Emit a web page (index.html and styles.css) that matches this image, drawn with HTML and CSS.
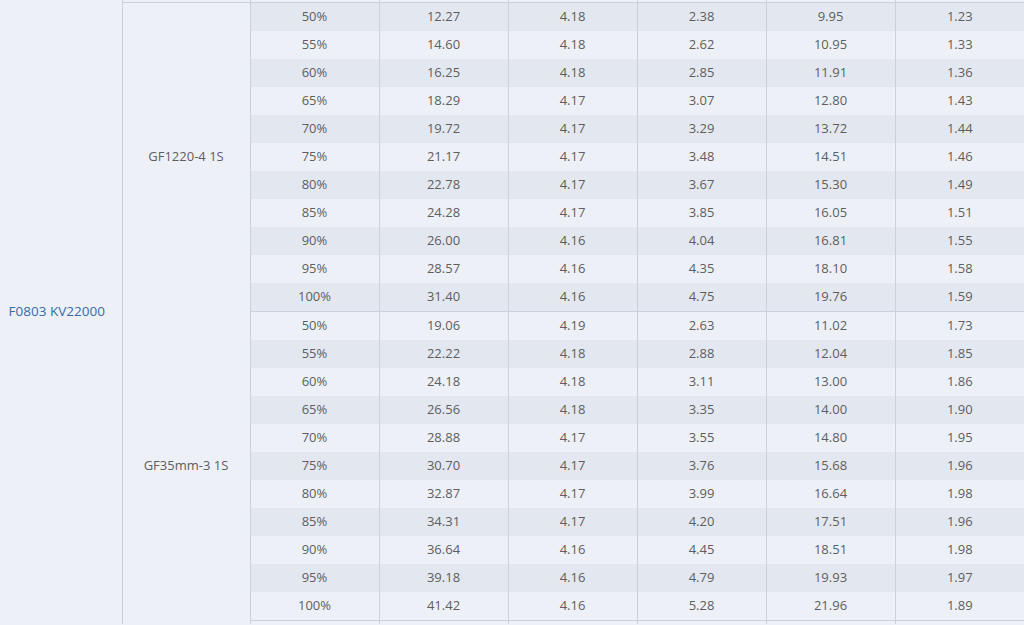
FILE: index.html
```html
<!DOCTYPE html>
<html lang="zh">
<head>
<meta charset="utf-8">
<title>F0803 KV22000</title>
<link rel="stylesheet" href="styles.css">
</head>
<body>
<table class="data">
<colgroup>
<col class="c-motor"><col class="c-prop"><col class="c-w"><col class="c-w"><col class="c-w"><col class="c-w"><col class="c-w"><col class="c-w">
</colgroup>
<tbody>
<tr class="edge-top"><td class="motor-cont"></td><td></td><td></td><td></td><td></td><td></td><td></td><td></td></tr>
<tr class="first"><td class="motor" rowspan="22">F0803 KV22000</td><td class="prop" rowspan="11">GF1220-4 1S</td><td>50%</td><td>12.27</td><td>4.18</td><td>2.38</td><td>9.95</td><td>1.23</td></tr>
<tr><td>55%</td><td>14.60</td><td>4.18</td><td>2.62</td><td>10.95</td><td>1.33</td></tr>
<tr><td>60%</td><td>16.25</td><td>4.18</td><td>2.85</td><td>11.91</td><td>1.36</td></tr>
<tr><td>65%</td><td>18.29</td><td>4.17</td><td>3.07</td><td>12.80</td><td>1.43</td></tr>
<tr><td>70%</td><td>19.72</td><td>4.17</td><td>3.29</td><td>13.72</td><td>1.44</td></tr>
<tr><td>75%</td><td>21.17</td><td>4.17</td><td>3.48</td><td>14.51</td><td>1.46</td></tr>
<tr><td>80%</td><td>22.78</td><td>4.17</td><td>3.67</td><td>15.30</td><td>1.49</td></tr>
<tr><td>85%</td><td>24.28</td><td>4.17</td><td>3.85</td><td>16.05</td><td>1.51</td></tr>
<tr><td>90%</td><td>26.00</td><td>4.16</td><td>4.04</td><td>16.81</td><td>1.55</td></tr>
<tr><td>95%</td><td>28.57</td><td>4.16</td><td>4.35</td><td>18.10</td><td>1.58</td></tr>
<tr class="last"><td>100%</td><td>31.40</td><td>4.16</td><td>4.75</td><td>19.76</td><td>1.59</td></tr>
<tr><td class="prop" rowspan="11">GF35mm-3 1S</td><td>50%</td><td>19.06</td><td>4.19</td><td>2.63</td><td>11.02</td><td>1.73</td></tr>
<tr><td>55%</td><td>22.22</td><td>4.18</td><td>2.88</td><td>12.04</td><td>1.85</td></tr>
<tr><td>60%</td><td>24.18</td><td>4.18</td><td>3.11</td><td>13.00</td><td>1.86</td></tr>
<tr><td>65%</td><td>26.56</td><td>4.18</td><td>3.35</td><td>14.00</td><td>1.90</td></tr>
<tr><td>70%</td><td>28.88</td><td>4.17</td><td>3.55</td><td>14.80</td><td>1.95</td></tr>
<tr><td>75%</td><td>30.70</td><td>4.17</td><td>3.76</td><td>15.68</td><td>1.96</td></tr>
<tr><td>80%</td><td>32.87</td><td>4.17</td><td>3.99</td><td>16.64</td><td>1.98</td></tr>
<tr><td>85%</td><td>34.31</td><td>4.17</td><td>4.20</td><td>17.51</td><td>1.96</td></tr>
<tr><td>90%</td><td>36.64</td><td>4.16</td><td>4.45</td><td>18.51</td><td>1.98</td></tr>
<tr><td>95%</td><td>39.18</td><td>4.16</td><td>4.79</td><td>19.93</td><td>1.97</td></tr>
<tr class="last"><td>100%</td><td>41.42</td><td>4.16</td><td>5.28</td><td>21.96</td><td>1.89</td></tr>
<tr class="edge-bottom"><td class="motor-cont"></td><td></td><td></td><td></td><td></td><td></td><td></td><td></td></tr>
</tbody>
</table>
</body>
</html>
```

FILE: styles.css
```css
html, body {
  margin: 0;
  padding: 0;
  background: #edf1f7;
  overflow: hidden;
}

.data {
  width: 1024px;
  table-layout: fixed;
  border-collapse: collapse;
  font-family: "Open Sans", "Noto Sans", "Noto Sans CJK SC", sans-serif;
  font-size: 13px;
  color: #5e5e5e;
}

.c-motor { width: 122px; }
.c-prop { width: 128px; }
.c-w { width: 129px; }

.data td {
  height: 28px;
  padding: 0 0 2px;
  box-sizing: border-box;
  text-align: center;
  vertical-align: middle;
  border-left: 1px solid #cbd1da;
  border-right: 1px solid #cbd1da;
  line-height: 26px;
  white-space: nowrap;
  background: #edf1f7;
}

.data td:first-child { border-left: none; }
.data td:last-child { border-right: none; }

.data tr:nth-child(even) td { background: #e3e8f0; }

.data tr td.motor,
.data tr td.prop,
.data tr td.motor-cont { background: #edf1f7; }

.data tr td.motor {
  color: #3a6aa6;
  font-size: 13.5px;
  padding: 0 8px 0 0;
}

.data tr.edge-top td {
  height: 2px;
  line-height: 2px;
  padding: 0;
  border-bottom: 1px solid #cbd1da;
  background: #edf1f7;
}

.data tr.last td {
  border-bottom: 1px solid #cbd1da;
}

.data tr.edge-bottom td {
  height: 4px;
  line-height: 4px;
  padding: 0;
  background: #edf1f7;
}

.data td.motor-cont,
.data td.motor { border-top: none; border-bottom: none; }
.data tr.edge-top td.motor-cont { border-bottom: none; }
```
